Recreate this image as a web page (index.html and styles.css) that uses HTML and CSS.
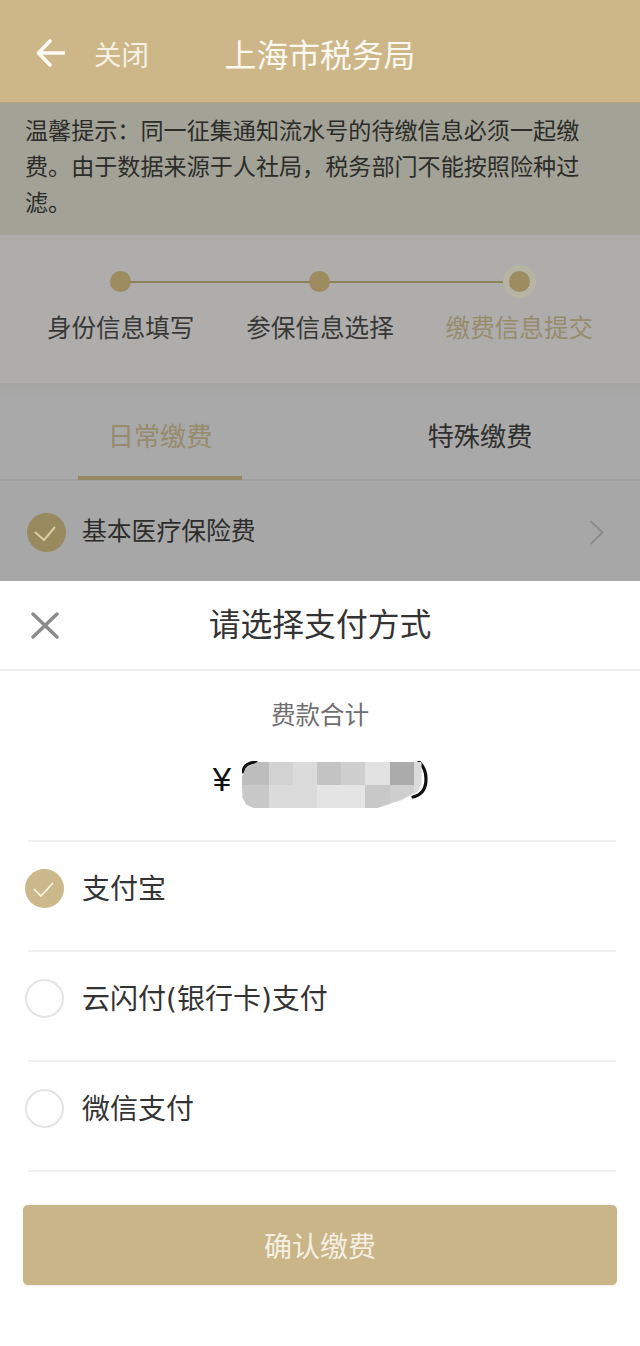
FILE: index.html
```html
<!DOCTYPE html>
<html lang="zh-CN">
<head>
<meta charset="utf-8">
<title>上海市税务局</title>
<link rel="stylesheet" href="styles.css">
</head>
<body>
<div class="page">
  <header class="topbar">
    <div class="topbar-left">
      <svg class="back" viewBox="0 0 29 28" aria-hidden="true"><path d="M14 2 2.500 14 14 26M3 14H28.500"/></svg>
      <span class="close-label">关闭</span>
    </div>
    <h1 class="topbar-title">上海市税务局</h1>
    <div></div>
  </header>

  <p class="notice">温馨提示：同一征集通知流水号的待缴信息必须一起缴费。由于数据来源于人社局，税务部门不能按照险种过滤。</p>

  <section class="steps">
    <div class="step"><span class="dot"></span><span class="step-label">身份信息填写</span></div>
    <div class="step"><span class="dot"></span><span class="step-label">参保信息选择</span></div>
    <div class="step step-current"><span class="dot"></span><span class="step-label">缴费信息提交</span></div>
  </section>

  <div class="band"></div>

  <nav class="tabs">
    <div class="tab tab-active">日常缴费</div>
    <div class="tab">特殊缴费</div>
  </nav>

  <div class="insurance">
    <span class="check check-dim">
      <svg viewBox="0 0 39 39" aria-hidden="true"><path d="M8 19 17 27 28 14"/></svg>
    </span>
    <span class="insurance-name">基本医疗保险费</span>
    <svg class="chevron" viewBox="0 0 15 25" aria-hidden="true"><path d="M1.500 1 13.500 12.500 1.500 24"/></svg>
  </div>

  <section class="sheet">
    <div class="sheet-head">
      <svg class="close-x" viewBox="0 0 28 27" aria-hidden="true"><path d="M2 2 26 25M26 2 2 25"/></svg>
      <h2 class="sheet-title">请选择支付方式</h2>
    </div>

    <div class="total">
      <div class="total-label">费款合计</div>
      <div class="amount">
        <span class="yen">¥</span>
        <span class="amount-value">
          <svg class="brackets" viewBox="0 0 186 38" aria-hidden="true"><path d="M1 11Q2 2 14 1M177 1Q184 7 184 18Q184 33 171 36"/></svg>
          <span class="mosaic">
            <i class="s1"></i><i class="s2"></i><i class="s3"></i><i class="s4"></i><i class="s5"></i><i class="s6"></i><i class="s7"></i><i class="s3"></i>
            <i class="s8"></i><i class="s3"></i><i class="s3"></i><i class="s9"></i><i class="s9"></i><i class="s8"></i><i class="s5"></i><i class="s3"></i>
          </span>
        </span>
      </div>
    </div>

    <hr class="rule">
    <div class="pay-row">
      <span class="check">
        <svg viewBox="0 0 39 39" aria-hidden="true"><path d="M9 20 16 27 28 14"/></svg>
      </span>
      <span class="pay-name">支付宝</span>
    </div>
    <hr class="rule">
    <div class="pay-row">
      <span class="radio"></span>
      <span class="pay-name">云闪付(银行卡)支付</span>
    </div>
    <hr class="rule">
    <div class="pay-row">
      <span class="radio"></span>
      <span class="pay-name">微信支付</span>
    </div>
    <hr class="rule">

    <button class="confirm" type="button">确认缴费</button>
  </section>
</div>
</body>
</html>
```
FILE: styles.css
```css
* { box-sizing: border-box; }

html, body {
  margin: 0;
  padding: 0;
}

body {
  font-family: "Noto Sans CJK SC", "Noto Sans", sans-serif;
  background: #fff;
  color: #333;
}

.page {
  width: 640px;
  height: 1346px;
  display: flex;
  flex-direction: column;
  overflow: hidden;
}

/* top bar */
.topbar {
  height: 103px;
  flex: none;
  padding-top: 3px;
  display: grid;
  grid-template-columns: 1fr auto 1fr;
  align-items: center;
  background: #cdb688;
  border-bottom: 1px solid #b5a586;
  color: #fbf8f0;
}

.topbar-left {
  display: flex;
  align-items: center;
  padding-left: 36px;
}

.back {
  width: 29px;
  height: 28px;
  margin-top: 0;
  fill: none;
  stroke: #fdfbf6;
  stroke-width: 3.6;
  stroke-linecap: round;
  stroke-linejoin: round;
}

.close-label {
  margin-left: 29px;
  font-size: 27.500px;
  line-height: 36px;
  color: #f7f1e3;
}

.topbar-title {
  margin: 0;
  font-size: 31.8px;
  line-height: 40px;
  font-weight: 400;
}

/* notice */
.notice {
  margin: 0;
  height: 132px;
  flex: none;
  padding: 8px 56px 0 25px;
  font-size: 23.1px;
  line-height: 36px;
  color: #2c2c28;
  background: linear-gradient(#a2a297, #a3a297);
}

/* stepper */
.steps {
  height: 148px;
  flex: none;
  padding: 36px 21px 0;
  display: grid;
  grid-template-columns: repeat(3, 1fr);
  background: #aeadac;
}

.step {
  position: relative;
  display: flex;
  flex-direction: column;
  align-items: center;
}

.step:not(:last-child)::after {
  content: "";
  position: absolute;
  left: 50%;
  top: 10px;
  width: 100%;
  height: 2px;
  background: #8b8258;
}

.dot {
  position: relative;
  z-index: 1;
  width: 21px;
  height: 21px;
  border-radius: 50%;
  background: #9c8c60;
}

.step-current .dot {
  box-shadow: 0 0 0 6px #b8b4a4;
}

.step-label {
  margin-top: 17px;
  font-size: 24.6px;
  line-height: 34px;
  color: #383836;
}

.step-current .step-label {
  color: #968b6b;
}

.band {
  height: 12px;
  flex: none;
  background: linear-gradient(#a5a5a4, #a8a8a8);
}

/* tabs */
.tabs {
  height: 86px;
  flex: none;
  display: grid;
  grid-template-columns: 1fr 1fr;
  background: #a9a9a9;
  border-bottom: 2px solid #9e9e9e;
}

.tab {
  position: relative;
  display: flex;
  align-items: center;
  justify-content: center;
  padding-bottom: 4px;
  font-size: 26.2px;
  color: #2f2f2e;
}

.tab-active {
  color: #968b6b;
}

.tab-active::after {
  content: "";
  position: absolute;
  left: 78px;
  bottom: -1px;
  width: 164px;
  height: 4px;
  background: #978762;
}

/* insurance row behind the sheet */
.insurance {
  height: 100px;
  flex: none;
  padding: 2px 36px 0 27px;
  display: flex;
  align-items: center;
  background: #a7a7a7;
}

.insurance-name {
  margin-left: 16px;
  margin-top: -6px;
  font-size: 24.8px;
  line-height: 34px;
  color: #2c2c2b;
}

.chevron {
  width: 15px;
  height: 25px;
  margin-left: auto;
  fill: none;
  stroke: #8b8b8b;
  stroke-width: 2;
}

/* checks */
.check {
  width: 39px;
  height: 39px;
  flex: none;
  border-radius: 50%;
  background: #cbb88b;
}

.check svg {
  display: block;
  width: 39px;
  height: 39px;
  fill: none;
  stroke: #fbf7e8;
  stroke-width: 1.6;
}

.check-dim {
  background: #988a5f;
}

.check-dim svg {
  stroke: #d9cba4;
  stroke-width: 2;
}

.radio {
  width: 39px;
  height: 39px;
  flex: none;
  border-radius: 50%;
  border: 2px solid #e4e4e4;
}

/* bottom sheet */
.sheet {
  flex: 1;
  display: flex;
  flex-direction: column;
  background: #fff;
}

.sheet-head {
  position: relative;
  height: 90px;
  flex: none;
  display: flex;
  align-items: center;
  justify-content: center;
  padding-bottom: 6px;
  border-bottom: 2px solid #ececec;
}

.close-x {
  position: absolute;
  left: 31px;
  top: 31px;
  width: 28px;
  height: 27px;
  fill: none;
  stroke: #8a8a8a;
  stroke-width: 3.4;
  stroke-linecap: round;
}

.sheet-title {
  margin: 0;
  font-size: 31.8px;
  line-height: 44px;
  font-weight: 400;
  color: #333;
}

.total {
  height: 169px;
  flex: none;
  padding-top: 25px;
  text-align: center;
}

.total-label {
  font-size: 24.5px;
  line-height: 36px;
  color: #6f6f6f;
}

.amount {
  margin-top: 29px;
  display: flex;
  justify-content: center;
  align-items: center;
  gap: 10px;
}

.yen {
  width: 19px;
  font-family: "Liberation Sans", sans-serif;
  font-size: 33px;
  line-height: 38px;
  color: #111;
}

.amount-value {
  position: relative;
  display: block;
  width: 186px;
  height: 38px;
}

.brackets {
  display: block;
  width: 186px;
  height: 38px;
  fill: none;
  stroke: #111;
  stroke-width: 3.2;
  stroke-linecap: round;
}

.mosaic {
  position: absolute;
  left: 0;
  top: 1px;
  width: 180px;
  height: 46px;
  display: grid;
  grid-template-columns: 27px 24px 24px 24px 24px 25px 24px 8px;
  grid-template-rows: 23px 23px;
  clip-path: polygon(16px 0, 180px 0, 180px 22px, 176px 30px, 169px 33px, 160px 38px, 145px 43px, 136px 46px, 12px 46px, 5px 43px, 1px 36px, 0 16px, 4px 6px);
}

.s1 { background: #bdbdbd; }
.s2 { background: #d3d3d3; }
.s3 { background: #dbdbdb; }
.s4 { background: #c4c4c4; }
.s5 { background: #cfcfcf; }
.s6 { background: #e2e2e2; }
.s7 { background: #ababab; }
.s8 { background: #c8c8c8; }
.s9 { background: #e5e5e5; }

.rule {
  margin: 0 24px 0 28px;
  height: 2px;
  flex: none;
  border: 0;
  background: #f0f0f0;
}

.pay-row {
  height: 108px;
  flex: none;
  padding: 27px 0 0 25px;
  display: flex;
  align-items: flex-start;
}

.pay-name {
  margin-left: 18px;
  margin-top: 1px;
  font-family: "DejaVu Sans", "Noto Sans CJK SC", sans-serif;
  font-size: 28px;
  line-height: 40px;
  color: #333;
}

.confirm {
  margin: 33px 23px 0;
  height: 80px;
  flex: none;
  border: 0;
  border-radius: 5px;
  background: #c9b587;
  color: #f5efe2;
  font-family: inherit;
  font-size: 28px;
  box-shadow: 0 1px 2px rgba(0, 0, 0, 0.08);
}
```
